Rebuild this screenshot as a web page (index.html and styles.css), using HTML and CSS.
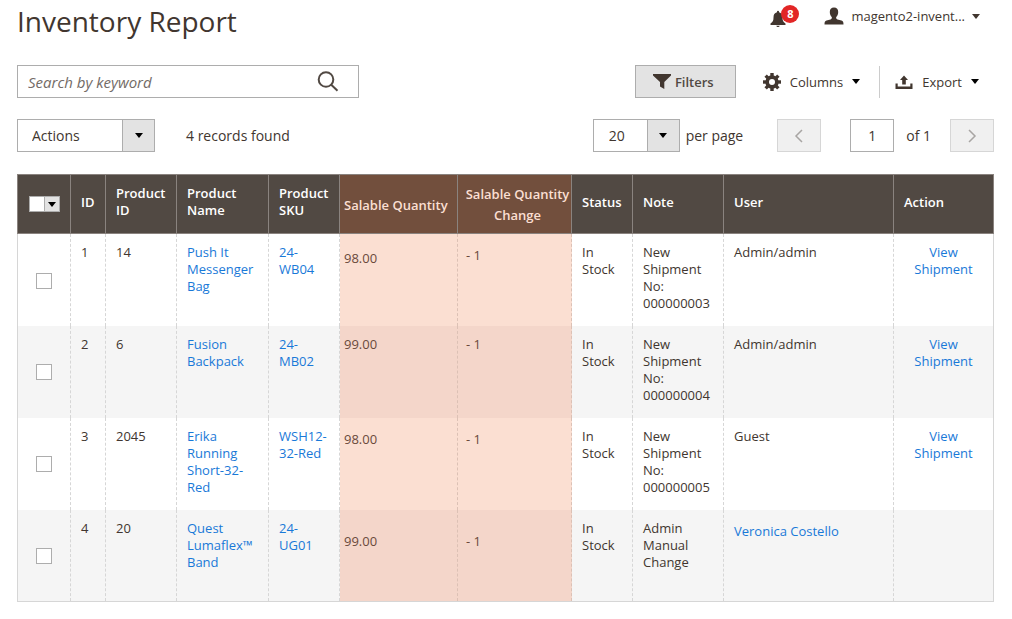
FILE: index.html
```html
<!DOCTYPE html>
<html lang="en">
<head>
<meta charset="utf-8">
<meta name="viewport" content="width=device-width, initial-scale=1">
<title>Inventory Report</title>
<link rel="stylesheet" href="styles.css">
</head>
<body>
<main class="page">
  <header class="page-header">
    <h1 class="page-title">Inventory Report</h1>
    <div class="header-tools">
      <button class="notifications" type="button" aria-label="Notifications">
        <svg class="icon-bell" viewBox="0 0 16 18" aria-hidden="true"><path d="M7 1.5C7 .6 9 .6 9 1.500V2.300C11.500 2.900 12.500 4.800 12.500 7.500C12.500 10.500 13 12 15.500 13.500V15H.5V13.500C3 12 3.500 10.500 3.500 7.500C3.500 4.800 4.500 2.900 7 2.300ZM6.300 15.800H9.700C9.500 17.400 6.500 17.400 6.300 15.800Z"/></svg>
        <span class="badge">8</span>
      </button>
      <button class="account" type="button">
        <svg class="icon-user" viewBox="0 0 20 18" aria-hidden="true"><path d="M10 .5C12.800 .5 14.200 2.200 14.200 5C14.200 7.500 13.300 9 12.200 10C12 11.300 12.300 12 13.500 12.400L17.500 13.600C19 14.100 19.500 15 19.500 17.500H.5C.5 15 1 14.100 2.500 13.600L6.500 12.400C7.700 12 8 11.300 7.800 10C6.700 9 5.800 7.500 5.800 5C5.800 2.200 7.200 .5 10 .5Z"/></svg>
        <span>magento2-invent...</span>
        <span class="caret caret-soft"></span>
      </button>
    </div>
  </header>

  <div class="toolbar toolbar-search">
    <form class="search" role="search">
      <input class="search-input" type="text" placeholder="Search by keyword" aria-label="Search by keyword">
      <button class="search-button" type="submit" aria-label="Search">
        <svg class="icon-search" viewBox="0 0 22 21" aria-hidden="true"><circle cx="9" cy="8.500" r="7.300"/><path d="M14 13.500L20.500 19.700"/></svg>
      </button>
    </form>
    <div class="grid-actions">
      <button class="filters" type="button">
        <svg class="icon-filter" viewBox="0 0 18 15" aria-hidden="true"><path d="M0 0H18V1.500L11.300 8V15L7 12.500V8L0 1.500Z"/></svg>
        <span>Filters</span>
      </button>
      <button class="menu-button columns" type="button">
        <svg class="icon-tool" viewBox="0 0 18 18" aria-hidden="true"><g><rect x="7.300" y="0" width="3.400" height="18"/><rect x="7.300" y="0" width="3.400" height="18" transform="rotate(45 9 9)"/><rect x="7.300" y="0" width="3.400" height="18" transform="rotate(90 9 9)"/><rect x="7.300" y="0" width="3.400" height="18" transform="rotate(135 9 9)"/><circle cx="9" cy="9" r="6.700"/></g><circle cx="9" cy="9" r="3" fill="#fff"/></svg>
        <span>Columns</span>
        <span class="caret"></span>
      </button>
      <button class="menu-button export" type="button">
        <svg class="icon-tool" viewBox="0 0 18 18" aria-hidden="true"><path d="M9 2.500L13 7H10.800V11.500H7.200V7H5ZM.5 10.500H2.700V13.500H15.300V10.500H17.500V16H.5Z"/></svg>
        <span>Export</span>
        <span class="caret"></span>
      </button>
    </div>
  </div>

  <div class="toolbar toolbar-paging">
    <div class="mass-actions">
      <div class="select select-actions">
        <select aria-label="Actions"><option>Actions</option></select>
        <span class="select-arrow"><span class="caret"></span></span>
      </div>
      <span>4 records found</span>
    </div>
    <div class="pager">
      <div class="select select-size">
        <select id="page-size"><option>20</option></select>
        <span class="select-arrow"><span class="caret"></span></span>
      </div>
      <label class="per-page" for="page-size">per page</label>
      <button class="page-step" type="button" aria-label="Previous page" disabled>
        <svg class="icon-step" viewBox="0 0 10 14" aria-hidden="true"><path d="M8 1L2 7L8 13"/></svg>
      </button>
      <input class="page-number" id="page-number" type="text" value="1">
      <label class="page-total" for="page-number">of 1</label>
      <button class="page-step" type="button" aria-label="Next page" disabled>
        <svg class="icon-step" viewBox="0 0 10 14" aria-hidden="true"><path d="M2 1L8 7L2 13"/></svg>
      </button>
    </div>
  </div>

  <table class="grid">
    <colgroup>
      <col class="col-check"><col class="col-id"><col class="col-pid"><col class="col-name"><col class="col-sku"><col class="col-qty"><col class="col-change"><col class="col-status"><col class="col-note"><col class="col-user"><col class="col-action">
    </colgroup>
    <thead>
      <tr>
        <th class="check"><div class="multicheck"><input type="checkbox" aria-label="Select all"><button type="button" aria-label="Selection options"><span class="caret"></span></button></div></th>
        <th>ID</th>
        <th>Product ID</th>
        <th>Product Name</th>
        <th>Product SKU</th>
        <th class="qty">Salable Quantity</th>
        <th class="change">Salable Quantity Change</th>
        <th>Status</th>
        <th>Note</th>
        <th>User</th>
        <th>Action</th>
      </tr>
    </thead>
    <tbody>
      <tr>
        <td class="check"><input type="checkbox" aria-label="Select row 1"></td>
        <td>1</td>
        <td>14</td>
        <td><a href="#">Push It Messenger Bag</a></td>
        <td><a href="#">24-WB04</a></td>
        <td class="qty drop-lg">98.00</td>
        <td class="change drop-md">- 1</td>
        <td>In Stock</td>
        <td>New Shipment No: 000000003</td>
        <td>Admin/admin</td>
        <td class="action"><a href="#">View Shipment</a></td>
      </tr>
      <tr>
        <td class="check"><input type="checkbox" aria-label="Select row 2"></td>
        <td>2</td>
        <td>6</td>
        <td><a href="#">Fusion Backpack</a></td>
        <td><a href="#">24-MB02</a></td>
        <td class="qty">99.00</td>
        <td class="change">- 1</td>
        <td>In Stock</td>
        <td>New Shipment No: 000000004</td>
        <td>Admin/admin</td>
        <td class="action"><a href="#">View Shipment</a></td>
      </tr>
      <tr>
        <td class="check"><input type="checkbox" aria-label="Select row 3"></td>
        <td>3</td>
        <td>2045</td>
        <td><a href="#">Erika Running Short-32-Red</a></td>
        <td><a href="#">WSH12-32-Red</a></td>
        <td class="qty drop-md">98.00</td>
        <td class="change drop-md">- 1</td>
        <td>In Stock</td>
        <td>New Shipment No: 000000005</td>
        <td>Guest</td>
        <td class="action"><a href="#">View Shipment</a></td>
      </tr>
      <tr>
        <td class="check"><input type="checkbox" aria-label="Select row 4"></td>
        <td>4</td>
        <td>20</td>
        <td><a href="#">Quest Lumaflex™ Band</a></td>
        <td><a href="#">24-UG01</a></td>
        <td class="qty drop-xl">99.00</td>
        <td class="change drop-xl">- 1</td>
        <td>In Stock</td>
        <td>Admin Manual Change</td>
        <td class="drop-md"><a href="#">Veronica Costello</a></td>
        <td class="action"></td>
      </tr>
    </tbody>
  </table>
</main>
</body>
</html>
```

FILE: styles.css
```css
* {
  box-sizing: border-box;
}

body {
  margin: 0;
  background: #fff;
  color: #41362f;
  font: 14px/20px "Open Sans", "Noto Sans", sans-serif;
}

button,
input,
select {
  margin: 0;
  padding: 0;
  border: 0;
  border-radius: 0;
  background: none;
  color: inherit;
  font: inherit;
}

svg {
  display: block;
  flex: none;
  fill: #41362f;
}

a {
  color: #1979d8;
  text-decoration: none;
}

.page {
  padding: 0 18px 16px 17px;
}

.page-header,
.toolbar,
.header-tools,
.grid-actions,
.mass-actions,
.pager,
.account,
.menu-button,
.filters {
  display: flex;
  align-items: center;
}

.page-header,
.toolbar {
  justify-content: space-between;
}

.page-header {
  align-items: flex-start;
  padding-top: 4px;
  height: 65px;
}

.page-title {
  margin: 0;
  font-size: 28px;
  line-height: 34px;
  font-weight: 400;
}

.header-tools {
  gap: 24px;
  padding-right: 14px;
}

.notifications {
  position: relative;
  width: 30px;
  height: 24px;
}

.icon-bell {
  width: 16px;
  height: 18px;
  margin-top: 6px;
}

.badge {
  position: absolute;
  top: 1px;
  right: 1px;
  width: 18px;
  height: 18px;
  border-radius: 50%;
  background: #e22626;
  color: #fff;
  font-size: 11px;
  line-height: 18px;
  font-weight: 700;
}

.account {
  gap: 7px;
  font-size: 13px;
}

.icon-user {
  width: 20px;
  height: 18px;
}

.caret {
  flex: none;
  border: 4px solid transparent;
  border-top: 5px solid #000;
  border-bottom: 0;
}

.caret-soft {
  border-top-color: #41362f;
}

.search {
  display: flex;
  flex: 0 1 342px;
  height: 33px;
  border: 1px solid #adadad;
}

.search-input {
  flex: 1;
  min-width: 0;
  padding: 0 10px;
  font-size: 15px;
}

.search-input::placeholder {
  color: #736b66;
  font-style: italic;
  opacity: 1;
}

.search-button {
  padding: 0 19px 0 8px;
}

.icon-search {
  width: 22px;
  height: 21px;
  fill: none;
  stroke: #514943;
  stroke-width: 2;
}

.filters {
  justify-content: center;
  gap: 4px;
  width: 101px;
  height: 33px;
  padding-right: 4px;
  border: 1px solid #adadad;
  background: #e3e3e3;
  color: #514943;
  font-size: 13px;
  font-weight: 600;
}

.icon-filter {
  width: 18px;
  height: 15px;
}

.menu-button {
  gap: 9px;
  height: 32px;
  font-size: 13px;
}

.columns {
  padding: 0 19px 0 27px;
}

.export {
  padding: 0 15px;
  border-left: 1px solid #ccc;
}

.icon-tool {
  width: 18px;
  height: 18px;
}

.toolbar-paging {
  padding: 21px 0 22px;
}

.mass-actions {
  gap: 31px;
}

.select {
  display: grid;
  height: 33px;
  border: 1px solid #adadad;
}

.select select {
  grid-area: 1 / 1;
  padding: 0 14px;
  appearance: none;
}

.select-arrow {
  display: grid;
  grid-area: 1 / 1;
  justify-self: end;
  place-items: center;
  width: 32px;
  border-left: 1px solid #adadad;
  background: #e3e3e3;
  pointer-events: none;
}

.select-actions {
  width: 138px;
}

.select-size {
  width: 87px;
}

.select-size select {
  padding: 0 15px;
}

.per-page {
  margin: 0 34px 0 6px;
}

.page-step {
  display: grid;
  place-items: center;
  width: 44px;
  height: 33px;
  border: 1px solid #d6d6d6;
  background: #f0f0f0;
}

.icon-step {
  width: 10px;
  height: 14px;
  fill: none;
  stroke: #a8a5a3;
  stroke-width: 1.5;
}

.page-number {
  width: 44px;
  height: 33px;
  margin: 0 12px 0 29px;
  border: 1px solid #adadad;
  text-align: center;
}

.page-total {
  margin-right: 19px;
}

.grid {
  width: 100%;
  border-collapse: collapse;
  table-layout: fixed;
  border: 1px solid #d6d6d6;
  font-size: 13px;
  line-height: 17px;
}

.col-check { width: 53px; }
.col-id { width: 35px; }
.col-pid { width: 71px; }
.col-name { width: 92px; }
.col-sku { width: 71px; }
.col-qty { width: 118px; }
.col-change { width: 114px; }
.col-status { width: 61px; }
.col-note { width: 91px; }
.col-user { width: 170px; }
.col-action { width: 100px; }

.grid th {
  height: 59px;
  padding: 6px 0 10px 10px;
  border: 1px solid #8a837f;
  background: #514943;
  color: #fff;
  font-weight: 600;
  text-align: left;
  vertical-align: middle;
}

.grid td {
  height: 92px;
  padding: 10px;
  border: 0 dashed #d6d6d6;
  border-width: 0 1px;
  vertical-align: top;
}

.grid tbody tr:nth-child(even) {
  background: #f5f5f5;
}

.grid th.qty,
.grid th.change {
  padding-top: 2px;
  padding-bottom: 0;
  background: #724f3d;
  color: #fbdfd2;
  line-height: 21px;
}

.grid .qty {
  padding-left: 4px;
}

.grid .change {
  padding-left: 8px;
}

.grid th.change {
  padding-left: 6px;
  text-align: center;
}

.grid td.qty,
.grid td.change {
  border-color: #dcc1b5;
  background: #fbdfd2;
  color: #6a4a3b;
}

.grid tr:nth-child(even) td.qty,
.grid tr:nth-child(even) td.change {
  background: #f4d6ca;
}

.grid td.drop-md {
  padding-top: 13px;
}

.grid td.drop-lg {
  padding-top: 16px;
}

.grid td.drop-xl {
  padding-top: 23px;
}

.grid td.action {
  text-align: center;
}

.grid td.check {
  padding: 0;
  text-align: center;
  vertical-align: middle;
}

.check input {
  appearance: none;
  width: 16px;
  height: 16px;
  border: 1px solid #adadad;
  background: #fff;
  vertical-align: middle;
}

.grid th.check {
  padding: 0;
}

.multicheck {
  display: flex;
  width: 31px;
  margin: 0 auto;
}

.multicheck button {
  display: grid;
  place-items: center;
  width: 15px;
  height: 16px;
  border: 1px solid #adadad;
  border-left: 0;
  background: #e3e3e3;
}
```
